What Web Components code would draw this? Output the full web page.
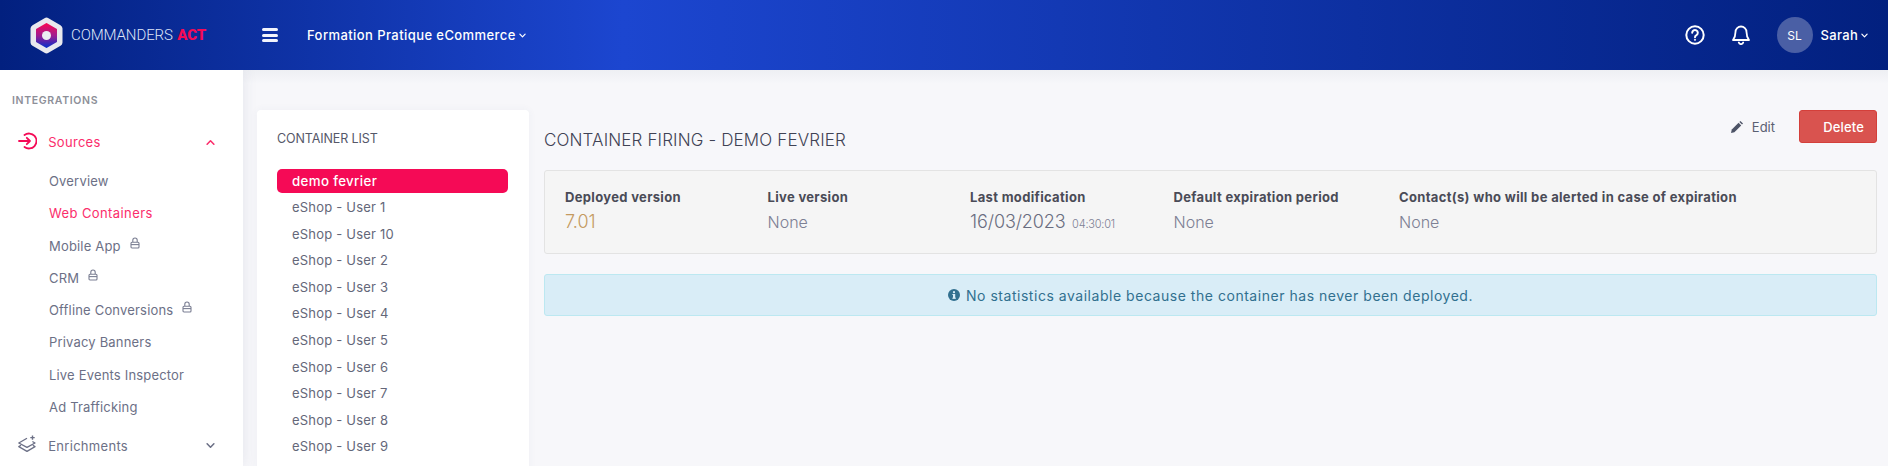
<!DOCTYPE html>
<html lang="en"><head><meta charset="utf-8"><title>Commanders Act</title>
<style>
html,body{margin:0;height:466px;overflow:hidden;background:#f7f7fa;font-family:Inter,"Noto Sans",sans-serif;}
body{display:flex;flex-direction:column;}
app-body{flex:1;min-height:0;}
</style></head><body>
<app-header></app-header>
<app-body>
<app-sidebar slot="side"></app-sidebar>
<container-list slot="list"></container-list>
<container-detail slot="detail"></container-detail>
</app-body>
<script>
const def=(n,html)=>customElements.define(n,class extends HTMLElement{constructor(){super();this.attachShadow({mode:'open'}).innerHTML=typeof html==='function'?html(this):html;}});
const chev=(up,c,s=8)=>`<svg width="${s}" height="${s}" viewBox="0 0 8 8" fill="none" stroke="${c}" stroke-width="1.4" stroke-linecap="round" stroke-linejoin="round"><path d="${up?'M1 5.5 4 2.5 7 5.5':'M1 2.5 4 5.5 7 2.5'}"/></svg>`;
const lock=`<svg width="10" height="12" viewBox="0 0 10 12" fill="none" stroke="#7b7f93" stroke-width="1.1"><rect x="1" y="5.2" width="8" height="5.8" rx="1"/><path d="M2.8 5V3.2a2.2 2.2 0 0 1 4.4 0V5"/><path d="M1 7.6h8"/></svg>`;

def('app-header',`<style>
:host{display:flex;align-items:center;height:70px;flex:none;position:relative;z-index:3;color:#fff;background:linear-gradient(90deg,#02207f 0%,#1c46d0 33%,#02207f 100%);font-size:13px;font-weight:500;}
.logo{display:flex;align-items:center;margin-left:30px;width:232px;}
.word{margin-left:8px;font:300 15px Roboto,sans-serif;color:#dfe5f7;letter-spacing:-.1px;white-space:nowrap}
.word b{font-weight:900;color:#f50a56;margin-left:1px}
.burger{width:16px;height:14px;display:flex;flex-direction:column;justify-content:space-between}
.burger i{display:block;height:3px;border-radius:1.5px;background:#f2f4fc}
.org{margin-left:29px;display:flex;align-items:center;gap:3px;letter-spacing:.42px;white-space:nowrap}
.right{margin-left:auto;display:flex;align-items:center;margin-right:20px}
.av{width:36px;height:36px;border-radius:50%;background:#4a5fa5;display:flex;align-items:center;justify-content:center;font-size:12px;font-weight:400;margin-left:27px;margin-right:8px}
.user{display:flex;align-items:center;gap:3px;letter-spacing:.3px}
svg{display:block}
.bell{margin-left:27px}
</style>
<div class="logo"><svg width="33" height="37" viewBox="0 0 33 37"><defs><linearGradient id="g" x1="0" y1="0" x2="0" y2="1"><stop offset="0" stop-color="#f50a56"/><stop offset=".5" stop-color="#a01a90"/><stop offset="1" stop-color="#0f2fc8"/></linearGradient></defs>
<path d="M14.5 1.2a4 4 0 0 1 4 0l12 7a4 4 0 0 1 2 3.4v13.8a4 4 0 0 1-2 3.4l-12 7a4 4 0 0 1-4 0l-12-7a4 4 0 0 1-2-3.4V11.600a4 4 0 0 1 2-3.400z" fill="#e9e9ee"/>
<path d="M16.500 7 26 12.500v12L16.500 30 7 24.500v-12z" fill="url(#g)" stroke="url(#g)" stroke-width="2" stroke-linejoin="round"/>
<circle cx="16.500" cy="18.500" r="4.500" fill="#ececf2"/></svg>
<span class="word">COMMANDERS <b>ACT</b></span></div>
<div class="burger"><i></i><i></i><i></i></div>
<div class="org"><span>Formation Pratique eCommerce</span>${chev(0,'#fff',7)}</div>
<div class="right">
<svg width="20" height="20" viewBox="0 0 20 20" fill="none" stroke="#fff" stroke-width="2"><circle cx="10" cy="10" r="8.700"/><path d="M7.200 7.800a2.800 2.800 0 1 1 4.300 2.300c-1 .6-1.500 1.100-1.500 2.100" stroke-linecap="round"/><circle cx="10" cy="14.800" r=".6" fill="#fff" stroke-width="1"/></svg>
<svg class="bell" width="18" height="20" viewBox="0 0 18 20" fill="none" stroke="#fff" stroke-width="1.800" stroke-linejoin="round"><path d="M9 1.500a5.500 5.500 0 0 0-5.500 5.500c0 4.500-1 6-2.500 8h16c-1.500-2-2.500-3.500-2.500-8A5.500 5.500 0 0 0 9 1.500z"/><path d="M6.800 17.500a2.300 2.300 0 0 0 4.400 0" stroke-linecap="round"/></svg>
<div class="av">SL</div>
<div class="user"><span>Sarah</span>${chev(0,'#fff',7)}</div>
</div>`);

def('side-item',h=>{const a=h.getAttribute.bind(h);return `<style>
:host{display:flex;align-items:center;height:32.300px;padding-left:49px;color:#6c7086;font-size:13px;letter-spacing:.18px;white-space:nowrap}
:host([active]){color:#fb2d6b;letter-spacing:.4px}
span{display:block}
svg{display:block;margin:-6px 0 0 ${a('gap')||9}px}
</style><span><slot></slot></span>${h.hasAttribute('locked')?lock:''}`});

def('side-head',h=>{const open=h.hasAttribute('open');return `<style>
:host{display:flex;align-items:center;height:38px;padding-left:18px;padding-right:28px;font-size:13px;letter-spacing:.3px;color:${open?'#fb2d6b':'#6c7086'}}
.ic{width:30.200px;flex:none}
.t{flex:1}
svg{display:block}
</style><div class="ic"><slot name="icon"></slot></div><div class="t"><slot></slot></div>${chev(open,open?'#fb2d6b':'#6c7086',9)}`});

def('app-sidebar',`<style>
:host{display:block;width:243px;flex:none;height:100%;background:#fff;box-shadow:0 0 14px rgba(60,70,110,.1);overflow:hidden;position:relative;z-index:2}
h4{margin:0;padding:24px 0 0 12px;height:31px;box-sizing:content-box;font-size:10.500px;line-height:14px;font-weight:600;letter-spacing:.65px;color:#8d8f98}
.sources{margin-top:-1.600px}
.sub{padding-top:3.400px}
.enr{margin-top:3.700px}
</style>
<h4>INTEGRATIONS</h4>
<side-head open class="sources"><svg slot="icon" width="19" height="18" viewBox="0 0 19 18" fill="none" stroke="#f50a56" stroke-width="1.800" stroke-linecap="round" stroke-linejoin="round"><path d="M6.500 3A7.500 7.500 0 1 1 6.500 15"/><path d="M1 9h11M8.800 5.800 12 9l-3.200 3.200"/></svg>Sources</side-head>
<div class="sub">
<side-item>Overview</side-item>
<side-item active>Web Containers</side-item>
<side-item locked>Mobile App</side-item>
<side-item locked>CRM</side-item>
<side-item locked>Offline Conversions</side-item>
<side-item>Privacy Banners</side-item>
<side-item>Live Events Inspector</side-item>
<side-item>Ad Trafficking</side-item>
</div>
<side-head class="enr"><svg slot="icon" width="18" height="18" viewBox="0 0 18 18" fill="none" stroke="#6c7086" stroke-width="1.300" stroke-linejoin="round"><path d="M9 3.200 .8 8 9 12.400 17 8l-2.600-1.500"/><path d="M3 10.200 .8 11.600 9 16.400l8-4.800-2.200-1.400"/><path d="M14.500 .4v4.400M12.300 2.600h4.400" stroke-width="1.400"/></svg>Enrichments</side-head>`);

def('list-row',`<style>
:host{display:flex;align-items:center;height:26.550px;padding-left:15px;font-size:13px;letter-spacing:.2px;color:#646779;border-radius:5px;white-space:nowrap}
:host([selected]){height:24px;background:#f50a56;color:#fff;font-weight:500;margin-bottom:1px;letter-spacing:.35px;font-size:13.300px}
</style><slot></slot>`);

def('container-list',`<style>
:host{display:block;width:272px;flex:none;box-sizing:border-box;height:400px;background:#fff;border-radius:4px;padding:19px 21px 0 20px;box-shadow:0 0 8px rgba(60,70,110,.05)}
h5{margin:0 0 21px;font-size:12.500px;line-height:19px;font-weight:400;color:#555869;letter-spacing:-.1px}
</style>
<h5>CONTAINER LIST</h5>
<list-row selected>demo fevrier</list-row>
<list-row>eShop - User 1</list-row><list-row>eShop - User 10</list-row><list-row>eShop - User 2</list-row><list-row>eShop - User 3</list-row><list-row>eShop - User 4</list-row><list-row>eShop - User 5</list-row><list-row>eShop - User 6</list-row><list-row>eShop - User 7</list-row><list-row>eShop - User 8</list-row><list-row>eShop - User 9</list-row>`);

def('info-col',h=>`<style>
:host{display:block;flex:none;width:${h.getAttribute('w')||'auto'}}
.l{font-size:13px;line-height:19px;font-weight:700;color:#4a4b57;letter-spacing:.33px;white-space:nowrap}
.v{font-size:16px;line-height:24px;margin-top:3px;font-weight:300;color:${h.getAttribute('c')||'#7d8094'};white-space:nowrap}
</style><div class="l">${h.getAttribute('l')}</div><div class="v"><slot></slot></div>`);

def('container-detail',`<style>
:host{display:block;flex:1;min-width:0;margin-left:16px;margin-right:11px}
.top{display:flex;align-items:flex-start;height:60px}
h1{margin:19px 0 0 -1px;font-size:17px;line-height:22px;font-weight:300;color:#3f4254;letter-spacing:.14px;white-space:nowrap}
.act{margin-left:auto;display:flex;align-items:center;height:33px}
.edit{display:flex;align-items:center;gap:9px;font-size:13px;color:#5a6072;margin-right:24px}
.del{width:78px;height:33px;box-sizing:border-box;display:flex;align-items:center;justify-content:flex-end;padding-right:12px;background:#d9534f;border:1px solid #d43f3a;border-radius:3px;color:#fff;font-size:13px;font-weight:500;letter-spacing:.15px}
.well{box-sizing:border-box;height:84px;margin-left:-1px;background:#f5f5f5;border:1px solid #e3e3e3;border-radius:3px;display:flex;padding:17px 0 0 20px}
.alert{box-sizing:border-box;height:42px;margin:20px 0 0 -1px;background:#d9edf7;border:1px solid #bce8f1;border-radius:3px;color:#31708f;font-size:14px;font-weight:400;letter-spacing:.53px;display:flex;align-items:center;justify-content:center;gap:6px}
.date{font-size:18px;color:#6a6d80;letter-spacing:-.1px}.time{font-size:11px;margin-left:2px;letter-spacing:-.2px}
.big{font-size:18px}
</style>
<div class="top"><h1>CONTAINER FIRING - DEMO FEVRIER</h1>
<div class="act"><div class="edit"><svg width="12" height="12" viewBox="0 0 12 12"><path d="M0 12l.8-3.400L7.600 1.800l2.600 2.600-6.800 6.800z" fill="#4d5366"/><path d="M8.400 1l1-1 2.600 2.600-1 1z" fill="#4d5366"/></svg><span>Edit</span></div><div class="del">Delete</div></div></div>
<div class="well">
<info-col w="202.500px" l="Deployed version" c="#c49a5f"><span class="big">7.01</span></info-col>
<info-col w="202.500px" l="Live version">None</info-col>
<info-col w="203.500px" l="Last modification"><span class="date">16/03/2023</span> <span class="time">04:30:01</span></info-col>
<info-col w="225.500px" l="Default expiration period">None</info-col>
<info-col l="Contact(s) who will be alerted in case of expiration">None</info-col>
</div>
<div class="alert"><svg width="12" height="12" viewBox="0 0 12 12"><circle cx="6" cy="6" r="6" fill="#31708f"/><rect x="5" y="5" width="2.200" height="4.500" fill="#d9edf7"/><rect x="4.300" y="8.700" width="3.600" height="1" fill="#d9edf7"/><rect x="4.300" y="5" width="2" height=".9" fill="#d9edf7"/><circle cx="6" cy="3.200" r="1.100" fill="#d9edf7"/></svg><span>No statistics available because the container has never been deployed.</span></div>`);

def('app-body',`<style>
:host{display:flex;overflow:hidden;background:linear-gradient(#eeeff3 0,#f7f7fa 14px)}
.side{display:block;height:100%}
.main{flex:1;min-width:0;display:flex;padding:40px 0 0 14px;align-items:flex-start}
</style>
<div class="side"><slot name="side"></slot></div>
<div class="main"><slot name="list"></slot><slot name="detail"></slot></div>`);
</script>
</body></html>
